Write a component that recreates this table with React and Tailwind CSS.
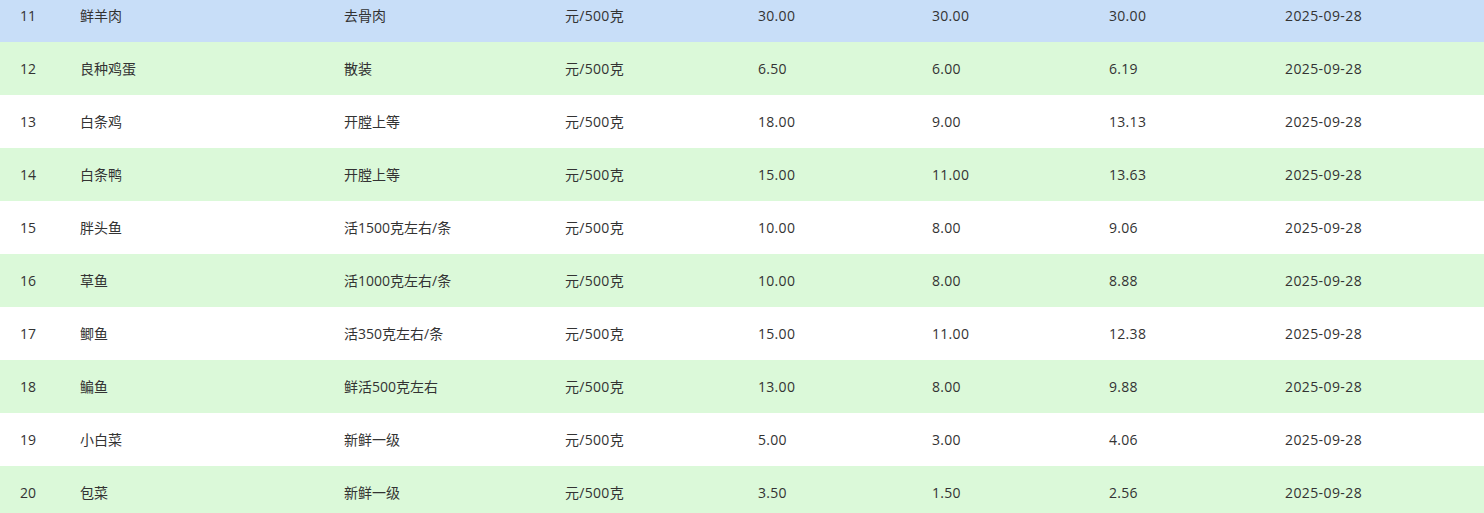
const rows = [
  ["11", "鲜羊肉", "去骨肉", "元/500克", "30.00", "30.00", "30.00", "2025-09-28"],
  ["12", "良种鸡蛋", "散装", "元/500克", "6.50", "6.00", "6.19", "2025-09-28"],
  ["13", "白条鸡", "开膛上等", "元/500克", "18.00", "9.00", "13.13", "2025-09-28"],
  ["14", "白条鸭", "开膛上等", "元/500克", "15.00", "11.00", "13.63", "2025-09-28"],
  ["15", "胖头鱼", "活1500克左右/条", "元/500克", "10.00", "8.00", "9.06", "2025-09-28"],
  ["16", "草鱼", "活1000克左右/条", "元/500克", "10.00", "8.00", "8.88", "2025-09-28"],
  ["17", "鲫鱼", "活350克左右/条", "元/500克", "15.00", "11.00", "12.38", "2025-09-28"],
  ["18", "鳊鱼", "鲜活500克左右", "元/500克", "13.00", "8.00", "9.88", "2025-09-28"],
  ["19", "小白菜", "新鲜一级", "元/500克", "5.00", "3.00", "4.06", "2025-09-28"],
  ["20", "包菜", "新鲜一级", "元/500克", "3.50", "1.50", "2.56", "2025-09-28"],
];

// first visible row is the selected one, then green/white stripes
function rowBg(i) {
  if (i === 0) return "bg-[#c8def8]";
  return i % 2 === 1 ? "bg-[#dbf9d9]" : "bg-white";
}

export default function App() {
  return (
    <div
      className="w-[1484px] h-[513px] overflow-hidden bg-white text-[14px] text-[#333]"
      style={{ fontFamily: '"Open Sans", "Noto Sans CJK SC", sans-serif' }}
    >
      <div className="-mt-[11px]">
        {rows.map((r, i) => (
          <div
            key={r[0]}
            className={`grid grid-cols-[80px_264px_221px_193px_174px_177px_176px_1fr] h-[53px] items-center ${rowBg(i)}`}
          >
            <div className="pl-5">{r[0]}</div>
            <div>{r[1]}</div>
            <div>{r[2]}</div>
            <div className="tracking-[0.3px]">{r[3]}</div>
            <div className="tracking-[0.3px]">{r[4]}</div>
            <div className="tracking-[0.3px]">{r[5]}</div>
            <div className="tracking-[0.3px]">{r[6]}</div>
            <div className="tracking-[0.4px]">{r[7]}</div>
          </div>
        ))}
      </div>
    </div>
  );
}
